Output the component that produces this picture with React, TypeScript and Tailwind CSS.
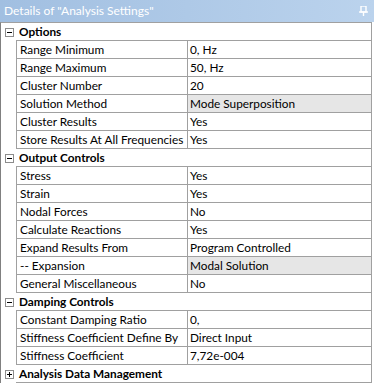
import { Fragment } from 'react'

type Item = { name: string; value: string; shaded?: boolean }
type Group = { title: string; open: boolean; items: Item[] }

const GROUPS: Group[] = [
  {
    title: 'Options',
    open: true,
    items: [
      { name: 'Range Minimum', value: '0, Hz' },
      { name: 'Range Maximum', value: '50, Hz' },
      { name: 'Cluster Number', value: '20' },
      { name: 'Solution Method', value: 'Mode Superposition', shaded: true },
      { name: 'Cluster Results', value: 'Yes' },
      { name: 'Store Results At All Frequencies', value: 'Yes' },
    ],
  },
  {
    title: 'Output Controls',
    open: true,
    items: [
      { name: 'Stress', value: 'Yes' },
      { name: 'Strain', value: 'Yes' },
      { name: 'Nodal Forces', value: 'No' },
      { name: 'Calculate Reactions', value: 'Yes' },
      { name: 'Expand Results From', value: 'Program Controlled' },
      { name: '-- Expansion', value: 'Modal Solution', shaded: true },
      { name: 'General Miscellaneous', value: 'No' },
    ],
  },
  {
    title: 'Damping Controls',
    open: true,
    items: [
      { name: 'Constant Damping Ratio', value: '0,' },
      { name: 'Stiffness Coefficient Define By', value: 'Direct Input' },
      { name: 'Stiffness Coefficient', value: '7,72e-004' },
    ],
  },
  { title: 'Analysis Data Management', open: false, items: [] },
]

function Toggle({ open }: { open: boolean }) {
  return (
    <svg width="9" height="9" viewBox="0 0 9 9" className="block">
      <rect x="0.5" y="0.5" width="8" height="8" fill="#fff" stroke="#8c8c8c" />
      <line x1="2" y1="4.5" x2="7" y2="4.5" stroke="#000" />
      {!open && <line x1="4.5" y1="2" x2="4.5" y2="7" stroke="#000" />}
    </svg>
  )
}

export default function App() {
  return (
    <div
      className="w-[374px] h-[384px] bg-white overflow-hidden text-[11.8px] text-black"
      style={{ fontFamily: 'Lato, "Open Sans", sans-serif' }}
    >
      <div className="h-[22px] flex items-center justify-between pl-[4px] pr-[6px] bg-gradient-to-r from-[#a1bfe1] to-[#bbd3ed]">
        <span className="text-white text-[12px] leading-none">Details of "Analysis Settings"</span>
        <svg width="9" height="10" viewBox="0 0 9 10" className="block">
          <rect x="2" y="0" width="5" height="6" fill="none" stroke="#fff" strokeWidth="1.4" />
          <line x1="0" y1="6" x2="9" y2="6" stroke="#fff" strokeWidth="1.4" />
          <line x1="4.5" y1="6" x2="4.5" y2="10" stroke="#fff" strokeWidth="1.4" />
        </svg>
      </div>
      <div className="w-[372px] border-l border-l-[#808080] border-r border-r-[#a0a0a0] border-t border-t-[#a0a0a0]">
        {GROUPS.map((g) => (
          <Fragment key={g.title}>
            <div className="flex h-[18px]">
              <div className="w-[15px] flex items-center justify-center pl-[1px]">
                <Toggle open={g.open} />
              </div>
              <div className="flex-1 flex items-center pl-[3px] font-bold border-b border-[#a0a0a0]">
                {g.title}
              </div>
            </div>
            {g.items.map((it) => (
              <div key={it.name} className="flex h-[18px]">
                <div className="w-[15px]" />
                <div className="w-[171px] flex items-center pl-[3px] border-l border-b border-[#a0a0a0] whitespace-nowrap overflow-hidden">
                  {it.name}
                </div>
                <div
                  className={`flex-1 flex items-center pl-[2px] border-l border-b border-[#a0a0a0] whitespace-nowrap ${
                    it.shaded ? 'bg-[#e6e6e6]' : ''
                  }`}
                >
                  {it.value}
                </div>
              </div>
            ))}
          </Fragment>
        ))}
      </div>
    </div>
  )
}
